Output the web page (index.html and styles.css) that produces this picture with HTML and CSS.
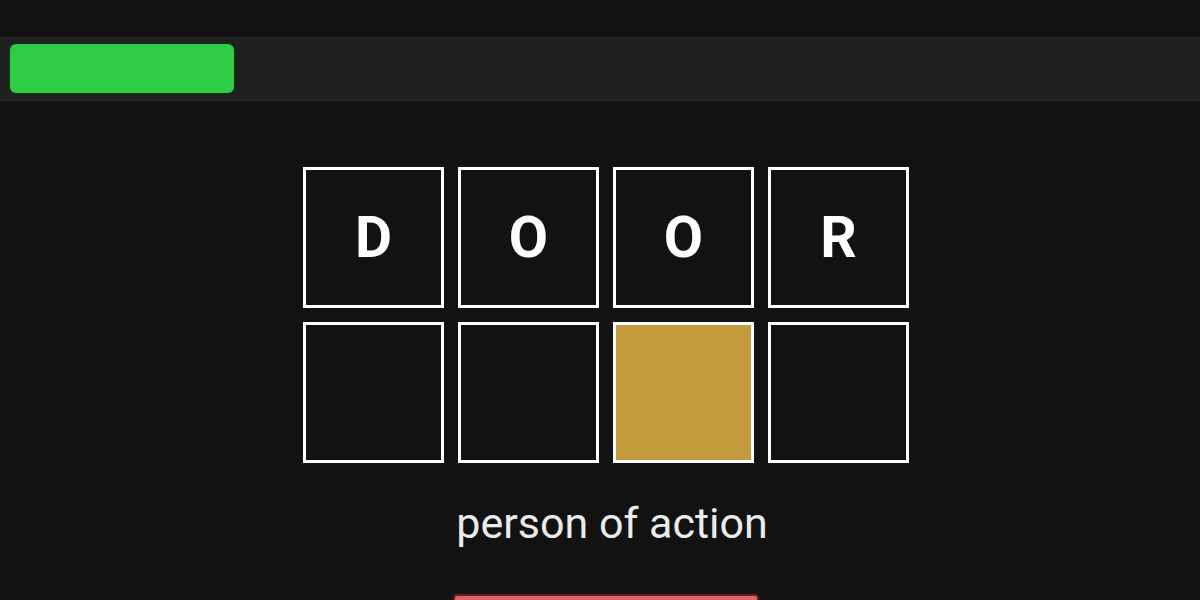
FILE: index.html
```html
<!DOCTYPE html>
<html lang="en">
<head>
  <meta charset="UTF-8" />
  <meta name="viewport" content="width=device-width, initial-scale=1.0" />
  <title>Word Guess</title>
  <link rel="stylesheet" href="styles.css">
</head>
<body>

  <div class="progress">
    <div class="progress-fill" style="width: 224px"></div>
  </div>

  <main class="game">
    <div class="board">
      <div class="tile">D</div>
      <div class="tile">O</div>
      <div class="tile">O</div>
      <div class="tile">R</div>
      <div class="tile"></div>
      <div class="tile"></div>
      <div class="tile present"></div>
      <div class="tile"></div>
    </div>

    <p class="hint">person of action</p>

    <button class="give-up" aria-label="Give up"></button>
  </main>

</body>
</html>
```

FILE: styles.css
```css
body {
  margin: 0;
  height: 100vh;
  background: #121212;
  overflow: hidden;
  font-family: Roboto, "Liberation Sans", sans-serif;
  color: #fff;
}

.progress {
  margin-top: 37px;
  height: 64px;
  box-sizing: border-box;
  padding: 5px 10px 0;
  background: #202020;
  border-top: 2px solid #262626;
  border-bottom: 2px solid #242424;
}

.progress-fill {
  height: 49px;
  background: #2fcc45;
  border-radius: 6px;
  box-shadow: 0 0 2px 1px #0b3a12;
}

.game {
  display: flex;
  flex-direction: column;
  align-items: center;
  padding-top: 66px;
  padding-left: 12px;
}

.board {
  display: grid;
  grid-template-columns: repeat(4, 141px);
  grid-auto-rows: 141px;
  gap: 14px;
}

.tile {
  box-sizing: border-box;
  border: 3px solid #fff;
  background: #121212;
  display: flex;
  align-items: center;
  justify-content: center;
  font-size: 57px;
  font-weight: 700;
  color: #fff;
}

.tile.present {
  background: #c39b3c;
}

.hint {
  margin: 35px 0 0;
  font-size: 43px;
  color: #eaeaea;
  padding-left: 12px;
}

.give-up {
  margin-top: 46px;
  width: 306px;
  height: 56px;
  border: 2px solid #6e1a1a;
  border-radius: 4px;
  background: #d86565;
}
```
